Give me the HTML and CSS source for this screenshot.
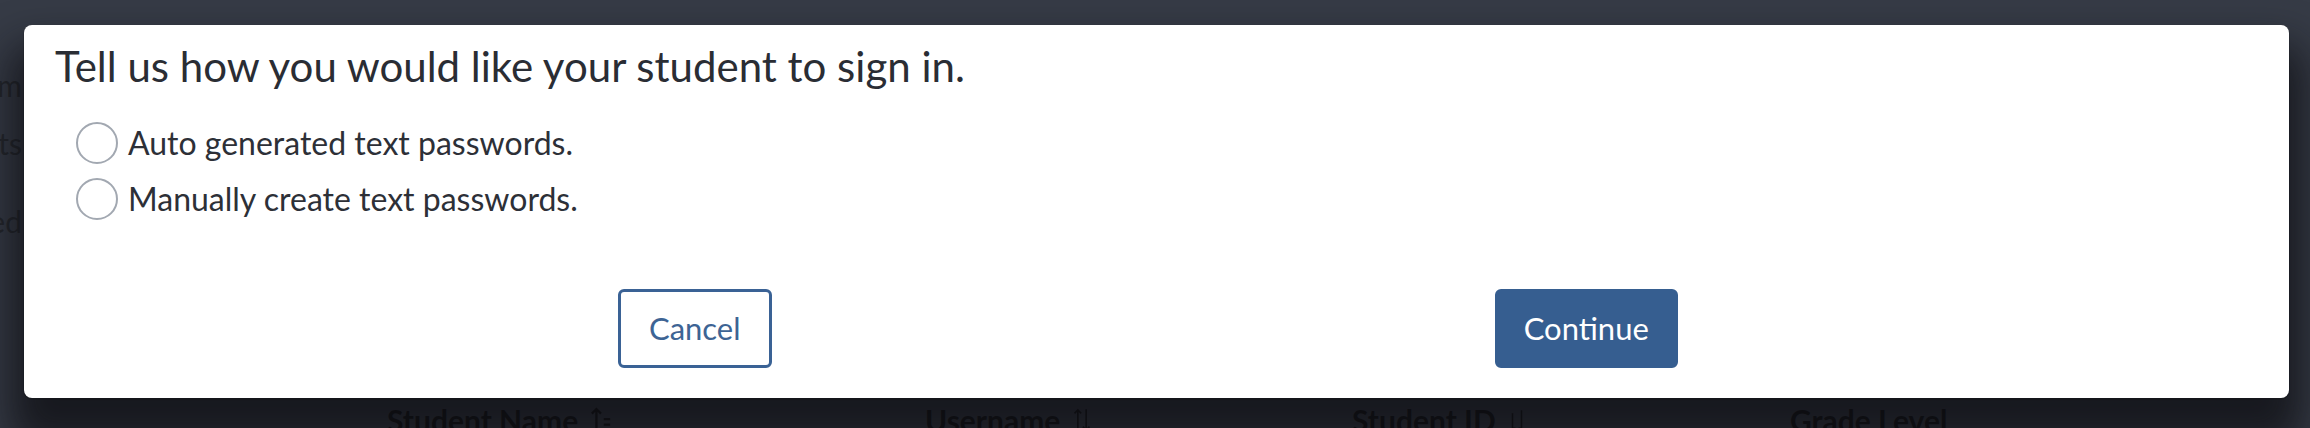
FILE: index.html
```html
<!DOCTYPE html>
<html lang="en">
<head>
<meta charset="utf-8">
<title>Sign-in method</title>
<link rel="stylesheet" href="styles.css">
</head>
<body>
  <div class="page">
    <nav class="side">
      <div class="side-item">Program</div>
      <div class="side-item">Students</div>
      <div class="side-item side-item--group">Assigned</div>
    </nav>
    <main class="main">
      <div class="table-head">
        <div class="th">Student Name
          <svg class="sort" viewBox="0 0 24 30" width="22" height="28"><path d="M7 28V3M2 8l5-5 5 5" fill="none" stroke="currentColor" stroke-width="2.5"/><path d="M15 14h7M15 20h7M15 26h7" stroke="currentColor" stroke-width="2.5"/></svg>
        </div>
        <div class="th">Username
          <svg class="sort" viewBox="0 0 24 30" width="20" height="28"><path d="M7 28V3M3 7l4-4 4 4M17 2v25M13 23l4 4 4-4" fill="none" stroke="currentColor" stroke-width="2"/></svg>
        </div>
        <div class="th">Student ID
          <svg class="sort" viewBox="0 0 24 30" width="18" height="28"><path d="M6 6v20h4M18 2v24h-4" fill="none" stroke="currentColor" stroke-width="2"/></svg>
        </div>
        <div class="th">Grade Level</div>
      </div>
    </main>
  </div>

  <div class="overlay">
    <section class="modal" role="dialog" aria-labelledby="modal-title">
      <h2 class="modal-title" id="modal-title">Tell us how you would like your student to sign in.</h2>
      <ul class="options">
        <li class="option"><span class="radio"></span><span class="option-label">Auto generated text passwords.</span></li>
        <li class="option"><span class="radio"></span><span class="option-label">Manually create text passwords.</span></li>
      </ul>
      <div class="actions">
        <div class="action-cell"><button class="btn btn-outline" type="button">Cancel</button></div>
        <div class="action-cell"><button class="btn btn-primary" type="button">Continue</button></div>
      </div>
    </section>
  </div>
</body>
</html>
```
FILE: styles.css
```css
html, body {
  margin: 0;
  padding: 0;
}

body {
  width: 2310px;
  height: 428px;
  overflow: hidden;
  background: #363b46;
  font-family: "Lato", "Liberation Sans", sans-serif;
  position: relative;
}

/* underlying page (dimmed by the overlay) */
.page {
  display: flex;
  height: 428px;
}

.side {
  width: 22px;
  flex: none;
  overflow: hidden;
  display: flex;
  flex-direction: column;
  align-items: flex-end;
  padding-top: 65px;
  gap: 18px;
}

.side-item {
  font-size: 30px;
  line-height: 40px;
  white-space: nowrap;
  color: #24272d;
}

.side-item--group {
  margin-top: 20px;
}

.main {
  flex: 1;
  padding-top: 402px;
  padding-left: 365px;
}

.table-head {
  display: grid;
  grid-template-columns: 538px 427px 438px auto;
}

.th {
  display: flex;
  align-items: center;
  gap: 12px;
  font-size: 30px;
  line-height: 36px;
  font-weight: 700;
  color: #121316;
  white-space: nowrap;
}

.sort {
  color: #121316;
}

/* modal overlay */
.overlay {
  position: absolute;
  inset: 0;
  padding: 25px 21px 0 24px;
}

.modal {
  background: #ffffff;
  border-radius: 8px;
  height: 373px;
  box-sizing: border-box;
  padding: 16px 31px 30px;
  box-shadow: 0 1px 0 1px rgba(0, 0, 0, 0.12), 0 34px 40px 14px rgba(12, 13, 16, 0.72);
  display: flex;
  flex-direction: column;
}

.modal-title {
  margin: 0;
  font-size: 42px;
  line-height: 50px;
  font-weight: 400;
  color: #2a2d34;
}

.options {
  list-style: none;
  margin: 31px 0 0 21px;
  padding: 0;
  display: flex;
  flex-direction: column;
  gap: 14px;
}

.option {
  display: flex;
  align-items: center;
  gap: 10px;
  height: 42px;
}

.radio {
  width: 42px;
  height: 42px;
  box-sizing: border-box;
  border: 2px solid #a2a8b1;
  border-radius: 50%;
  background: #fff;
  flex: none;
}

.option-label {
  font-size: 32px;
  line-height: 38px;
  color: #2d3037;
}

.actions {
  margin-top: 69px;
  padding: 0 226px 0 194px;
  display: grid;
  grid-template-columns: 1fr 1fr;
}

.action-cell {
  display: flex;
  justify-content: center;
}

.btn {
  font-family: inherit;
  font-size: 31px;
  line-height: 73px;
  height: 79px;
  border: 3px solid #3a6295;
  border-radius: 6px;
  cursor: pointer;
}

.btn-outline {
  background: #ffffff;
  color: #3d6494;
  padding: 0 28px;
}

.btn-primary {
  background: #365e90;
  border-color: #365e90;
  color: #ffffff;
  padding: 0 26px;
}
```
